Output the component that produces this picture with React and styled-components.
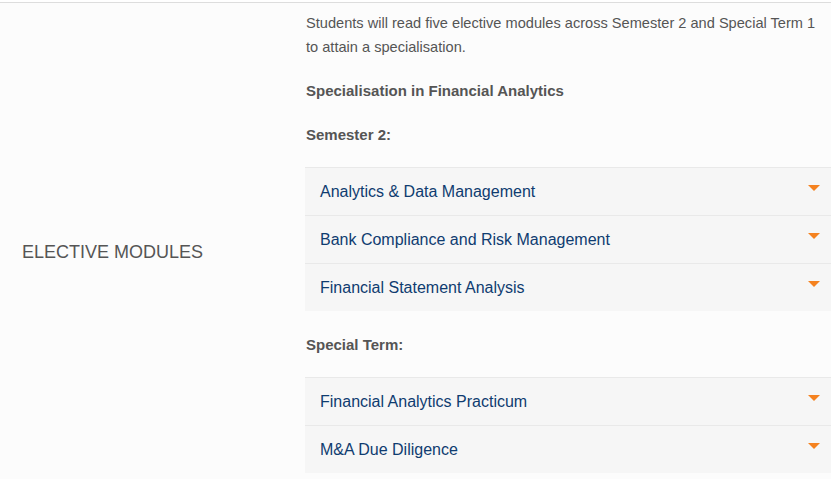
import styled, { createGlobalStyle } from 'styled-components';

const GlobalStyle = createGlobalStyle`
  html, body {
    margin: 0;
    padding: 0;
    background: #fff;
    font-family: "Liberation Sans", Arial, sans-serif;
  }
`;

const Page = styled.div`
  padding-top: 2px;
  overflow: hidden;
`;

const Section = styled.div`
  display: flex;
  border-top: 1px solid #dddddd;
  background: #fcfcfc;
`;

const Label = styled.div`
  width: 305px;
  flex: none;
  box-sizing: border-box;
  padding-left: 22px;
  display: flex;
  align-items: center;
  font-size: 18px;
  color: #555;
  text-transform: uppercase;
`;

const Content = styled.div`
  flex: 1;
  min-width: 0;
  padding: 8px 0 28px;
`;

const Text = styled.p`
  margin: 0 0 20px;
  padding: 0 12px 0 1px;
  font-size: ${p => (p.bold ? '15px' : '14.6px')};
  line-height: 24px;
  color: #555;
  font-weight: ${p => (p.bold ? 'bold' : 'normal')};
`;

const Accordion = styled.div`
  margin: 0 0 22px;
  &:last-child { margin-bottom: 0; }
`;

const Item = styled.div`
  height: 48px;
  box-sizing: border-box;
  display: flex;
  align-items: center;
  justify-content: space-between;
  padding: 0 11px 0 15px;
  background: #f6f6f6;
  border-top: 1px solid #e9e9e9;
  font-size: 16px;
  color: #0f3c70;
  cursor: pointer;
`;

const Caret = styled.span`
  width: 0;
  height: 0;
  border-left: 6px solid transparent;
  border-right: 6px solid transparent;
  border-top: 6px solid #f5821f;
  margin-top: -8px;
`;

const semester = [
  'Analytics & Data Management',
  'Bank Compliance and Risk Management',
  'Financial Statement Analysis',
];

const special = ['Financial Analytics Practicum', 'M&A Due Diligence'];

const Modules = ({ items }) => (
  <Accordion>
    {items.map(name => (
      <Item key={name}>
        <span>{name}</span>
        <Caret />
      </Item>
    ))}
  </Accordion>
);

export default function App() {
  return (
    <Page>
      <GlobalStyle />
      <Section>
        <Label>Elective Modules</Label>
        <Content>
          <Text>
            Students will read five elective modules across Semester 2 and Special Term 1 to attain a specialisation.
          </Text>
          <Text bold>Specialisation in Financial Analytics</Text>
          <Text bold>Semester 2:</Text>
          <Modules items={semester} />
          <Text bold>Special Term:</Text>
          <Modules items={special} />
        </Content>
      </Section>
    </Page>
  );
}
